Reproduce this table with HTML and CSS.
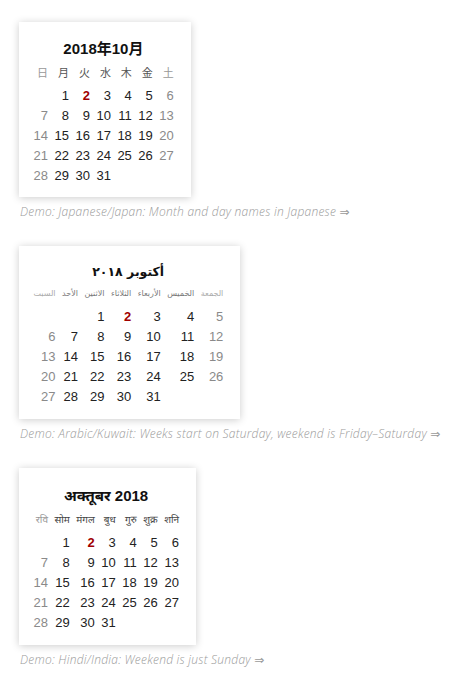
FILE: index.html
```html
<!DOCTYPE html>
<html lang="en">
<head>
<meta charset="utf-8">
<title>Calendar demos</title>
<link rel="stylesheet" href="styles.css">
</head>
<body>
<main class="demos">

  <section class="demo">
    <div class="cal cal-ja" lang="ja">
      <div class="cal-title">2018年10月</div>
      <table class="cal-grid">
        <thead>
          <tr><th class="we">日</th><th>月</th><th>火</th><th>水</th><th>木</th><th>金</th><th class="we">土</th></tr>
        </thead>
        <tbody>
          <tr><td></td><td>1</td><td class="today">2</td><td>3</td><td>4</td><td>5</td><td class="we">6</td></tr>
          <tr><td class="we">7</td><td>8</td><td>9</td><td>10</td><td>11</td><td>12</td><td class="we">13</td></tr>
          <tr><td class="we">14</td><td>15</td><td>16</td><td>17</td><td>18</td><td>19</td><td class="we">20</td></tr>
          <tr><td class="we">21</td><td>22</td><td>23</td><td>24</td><td>25</td><td>26</td><td class="we">27</td></tr>
          <tr><td class="we">28</td><td>29</td><td>30</td><td>31</td><td></td><td></td><td></td></tr>
        </tbody>
      </table>
    </div>
    <p class="caption">Demo: Japanese/Japan: Month and day names in Japanese ⇒</p>
  </section>

  <section class="demo">
    <div class="cal cal-ar" lang="ar">
      <div class="cal-title">أكتوبر ٢٠١٨</div>
      <table class="cal-grid">
        <thead>
          <tr><th class="we">السبت</th><th>الأحد</th><th>الاثنين</th><th>الثلاثاء</th><th>الأربعاء</th><th>الخميس</th><th class="we">الجمعة</th></tr>
        </thead>
        <tbody>
          <tr><td></td><td></td><td>1</td><td class="today">2</td><td>3</td><td>4</td><td class="we">5</td></tr>
          <tr><td class="we">6</td><td>7</td><td>8</td><td>9</td><td>10</td><td>11</td><td class="we">12</td></tr>
          <tr><td class="we">13</td><td>14</td><td>15</td><td>16</td><td>17</td><td>18</td><td class="we">19</td></tr>
          <tr><td class="we">20</td><td>21</td><td>22</td><td>23</td><td>24</td><td>25</td><td class="we">26</td></tr>
          <tr><td class="we">27</td><td>28</td><td>29</td><td>30</td><td>31</td><td></td><td></td></tr>
        </tbody>
      </table>
    </div>
    <p class="caption">Demo: Arabic/Kuwait: Weeks start on Saturday, weekend is Friday–Saturday ⇒</p>
  </section>

  <section class="demo">
    <div class="cal cal-hi" lang="hi">
      <div class="cal-title">अक्तूबर 2018</div>
      <table class="cal-grid">
        <thead>
          <tr><th class="we">रवि</th><th>सोम</th><th>मंगल</th><th>बुध</th><th>गुरु</th><th>शुक्र</th><th>शनि</th></tr>
        </thead>
        <tbody>
          <tr><td></td><td>1</td><td class="today">2</td><td>3</td><td>4</td><td>5</td><td>6</td></tr>
          <tr><td class="we">7</td><td>8</td><td>9</td><td>10</td><td>11</td><td>12</td><td>13</td></tr>
          <tr><td class="we">14</td><td>15</td><td>16</td><td>17</td><td>18</td><td>19</td><td>20</td></tr>
          <tr><td class="we">21</td><td>22</td><td>23</td><td>24</td><td>25</td><td>26</td><td>27</td></tr>
          <tr><td class="we">28</td><td>29</td><td>30</td><td>31</td><td></td><td></td><td></td></tr>
        </tbody>
      </table>
    </div>
    <p class="caption">Demo: Hindi/India: Weekend is just Sunday ⇒</p>
  </section>

</main>
</body>
</html>
```

FILE: styles.css
```css
html, body {
  margin: 0;
  padding: 0;
  background: #fff;
}

body {
  font-family: "Liberation Sans", Arial, "Noto Sans CJK JP", sans-serif;
  color: #222;
}

.demos {
  padding: 22px 0 0 19px;
  display: flex;
  flex-direction: column;
  align-items: flex-start;
}

.demo {
  display: flex;
  flex-direction: column;
  align-items: flex-start;
  margin-bottom: 26px;
}

.cal {
  background: #fff;
  box-shadow: 0 1px 8px rgba(0, 0, 0, 0.2);
  padding: 12px 14px 11px 11px;
}

.cal-title {
  font-weight: bold;
  font-size: 15px;
  line-height: 30px;
  text-align: center;
  color: #111;
}

.cal-grid {
  border-collapse: collapse;
  border-spacing: 0;
}

.cal-grid th {
  font-weight: normal;
  font-size: 11px;
  line-height: 18px;
  color: #555;
  text-align: right;
  padding: 0 3px 4px 3.5px;
}

.cal-grid td {
  font-size: 13px;
  line-height: 20px;
  height: 20px;
  color: #222;
  text-align: right;
  padding: 0 3px 0 3.5px;
}

.cal-grid th.we {
  color: #999;
}

.cal-grid td.we {
  color: #8a8a8a;
}

.cal-grid td.today {
  color: #a00000;
  font-weight: bold;
}

/* Japanese */
.cal-ja .cal-title,
.cal-ja th {
  font-family: "Liberation Sans", "Noto Sans CJK JP", sans-serif;
}

/* Arabic */
.cal-ar {
  padding-top: 13px;
  padding-bottom: 12px;
}

.cal-ar .cal-title {
  font-family: "DejaVu Sans", sans-serif;
  font-size: 12.5px;
  line-height: 26px;
}

.cal-ar th {
  font-family: "DejaVu Sans", sans-serif;
  font-size: 8px;
  color: #777;
  padding-bottom: 4px;
}

.cal-ar th.we {
  color: #aaa;
}

/* Hindi */
.cal-hi {
  padding-bottom: 12px;
}

.cal-hi .cal-title {
  font-family: "Liberation Sans", "Noto Sans Devanagari", "Noto Sans", sans-serif;
  line-height: 32px;
}

.cal-hi th {
  font-family: "Noto Sans Devanagari", "Noto Sans", "Liberation Sans", sans-serif;
  font-size: 10px;
  color: #444;
  padding-bottom: 3px;
}

.cal-hi th.we {
  color: #999;
}

.caption {
  margin: 7px 0 0 1px;
  font-family: "Open Sans", "DejaVu Sans", sans-serif;
  font-style: italic;
  font-weight: 300;
  font-size: 12px;
  letter-spacing: 0.25px;
  line-height: 16px;
  color: #9a9a9a;
  white-space: nowrap;
}
```
